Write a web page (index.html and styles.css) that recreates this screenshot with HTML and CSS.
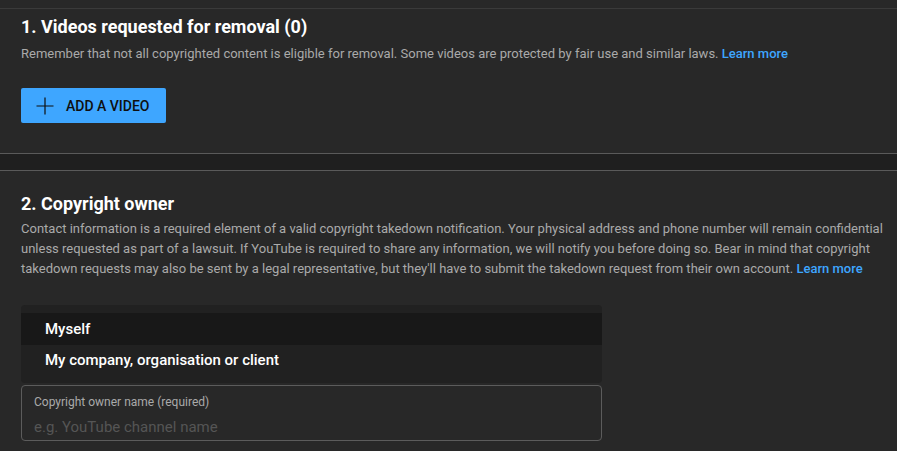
FILE: index.html
```html
<!DOCTYPE html>
<html>
<head>
<meta charset="utf-8">
<link rel="stylesheet" href="styles.css">
</head>
<body>
<div class="page">
  <section class="section first">
    <h2 class="title">1. Videos requested for removal (0)</h2>
    <p class="desc">Remember that not all copyrighted content is eligible for removal. Some videos are protected by fair use and similar laws. <a class="link" href="#">Learn more</a></p>
    <button class="add-btn" type="button">
      <svg class="plus" width="18" height="18" viewBox="0 0 18 18"><path d="M9 0.5V17.5M0.5 9H17.5" stroke="#0f0f0f" stroke-width="1.2" fill="none"/></svg>
      <span>ADD A VIDEO</span>
    </button>
  </section>
  <div class="divider"></div>
  <section class="section second">
    <h2 class="title">2. Copyright owner</h2>
    <p class="desc">Contact information is a required element of a valid copyright takedown notification. Your physical address and phone number will remain confidential unless requested as part of a lawsuit. If YouTube is required to share any information, we will notify you before doing so. Bear in mind that copyright takedown requests may also be sent by a legal representative, but they'll have to submit the takedown request from their own account. <a class="link" href="#">Learn more</a></p>
    <div class="menu">
      <div class="menu-item selected">Myself</div>
      <div class="menu-item">My company, organisation or client</div>
    </div>
    <div class="field">
      <div class="field-label">Copyright owner name (required)</div>
      <div class="field-placeholder">e.g. YouTube channel name</div>
    </div>
  </section>
</div>
</body>
</html>
```

FILE: styles.css
```css
html, body {
  margin: 0;
  padding: 0;
  background: #282828;
  font-family: Roboto, "Liberation Sans", sans-serif;
  color: #ffffff;
}

.page {
  padding-top: 8px;
}

.section {
  padding: 0 6px 0 21px;
}

.first {
  border-top: 1px solid #3a3a3a;
  padding-top: 6px;
  padding-bottom: 30px;
}

.title {
  margin: 0;
  font-size: 18px;
  line-height: 24px;
  font-weight: 700;
  color: #ffffff;
}

.desc {
  margin: 0;
  font-size: 13px;
  line-height: 20px;
  color: #aaaaaa;
}

.first .desc {
  margin-top: 5px;
}

.link {
  color: #3ea6ff;
  text-decoration: none;
  font-weight: 500;
}

.add-btn {
  margin-top: 24px;
  display: flex;
  align-items: center;
  gap: 12px;
  width: 145px;
  height: 35px;
  padding: 0 0 0 15px;
  border: none;
  border-radius: 2px;
  background: #3ea6ff;
  color: #0f0f0f;
  font-family: Roboto, "Liberation Sans", sans-serif;
  font-size: 14px;
  font-weight: 500;
}

.plus {
  display: block;
  flex: none;
}

.divider {
  height: 16px;
  background: #1f1f1f;
  border-top: 1px solid #5a5a5a;
  border-bottom: 1px solid #5a5a5a;
}

.second {
  padding-top: 21px;
}

.second .desc {
  margin-top: 3px;
}

.menu {
  margin-top: 26px;
  width: 581px;
  background: #212121;
  border-radius: 4px;
  padding: 8px 0;
}

.menu-item {
  height: 30px;
  line-height: 30px;
  padding-left: 24px;
  font-size: 15px;
  font-weight: 500;
  color: #ffffff;
}

.menu-item.selected {
  height: 32px;
  line-height: 32px;
  background: #181818;
}

.field {
  margin-top: 2px;
  width: 579px;
  height: 54px;
  border: 1px solid #5c5c5c;
  border-radius: 4px;
}

.field-label {
  padding: 8px 0 0 12px;
  font-size: 12px;
  line-height: 16px;
  color: #aaaaaa;
}

.field-placeholder {
  padding: 7px 0 0 12px;
  font-size: 15px;
  line-height: 20px;
  color: #555555;
}
```
